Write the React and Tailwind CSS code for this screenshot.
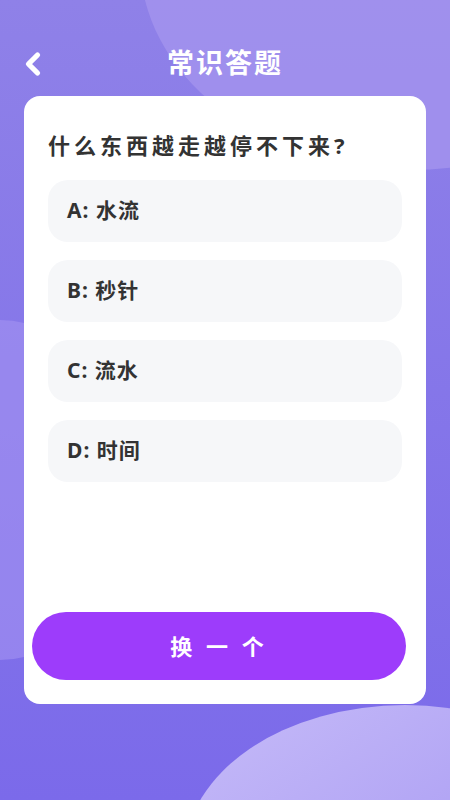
import { ChevronLeft } from "lucide-react";

const options = [
  { key: "A", text: "水流" },
  { key: "B", text: "秒针" },
  { key: "C", text: "流水" },
  { key: "D", text: "时间" },
];

const App = () => {
  return (
    <div
      className="relative w-[450px] h-[800px] overflow-hidden bg-gradient-to-b from-[#8f81e8] to-[#7b6aea]"
      style={{ fontFamily: '"Noto Sans", "Noto Sans CJK SC", sans-serif' }}
    >
      {/* background blobs */}
      <div className="absolute -top-[250px] left-[140px] w-[540px] h-[420px] rounded-[50%] bg-[#a494ee]/80" />
      <div className="absolute top-[320px] -left-[130px] w-[260px] h-[340px] rounded-[50%] bg-[#a393f1]/60" />
      <div className="absolute top-[705px] left-[185px] w-[440px] h-[300px] rounded-[50%] bg-gradient-to-br from-[#c6bbf8] to-[#9d8cf0]" />

      <div className="relative flex flex-col">
        <div className="relative flex justify-center h-[96px] pt-[49px]">
          <ChevronLeft
            className="absolute left-[15px] top-[46px] text-white"
            size={36}
            strokeWidth={3.5}
          />
          <h1 className="text-white text-[27px] font-bold tracking-[2px] leading-[28px]">常识答题</h1>
        </div>

        <div className="mx-[24px] h-[608px] bg-white rounded-[16px] flex flex-col pl-[8px] pr-[20px] pb-[24px]">
          <div className="pl-[16px] pr-[4px]">
            <h2 className="mt-[34px] text-[22px] font-bold text-[#333] tracking-[4px] leading-[30px]">
              什么东西越走越停不下来?
            </h2>
            <div className="mt-[20px] flex flex-col gap-[18px]">
              {options.map((o) => (
                <div
                  key={o.key}
                  className="h-[62px] rounded-[20px] bg-[#f6f7f9] flex items-center px-[19px] text-[21px] font-bold text-[#333] tracking-[1px]"
                >
                  {o.key}:&nbsp;{o.text}
                </div>
              ))}
            </div>
          </div>
          <div className="mt-auto">
            <button className="w-full h-[68px] rounded-full bg-[#9d3cfb] text-white text-[22px] font-bold tracking-[4px]">
              换 一 个
            </button>
          </div>
        </div>
      </div>
    </div>
  );
};

export default App;
